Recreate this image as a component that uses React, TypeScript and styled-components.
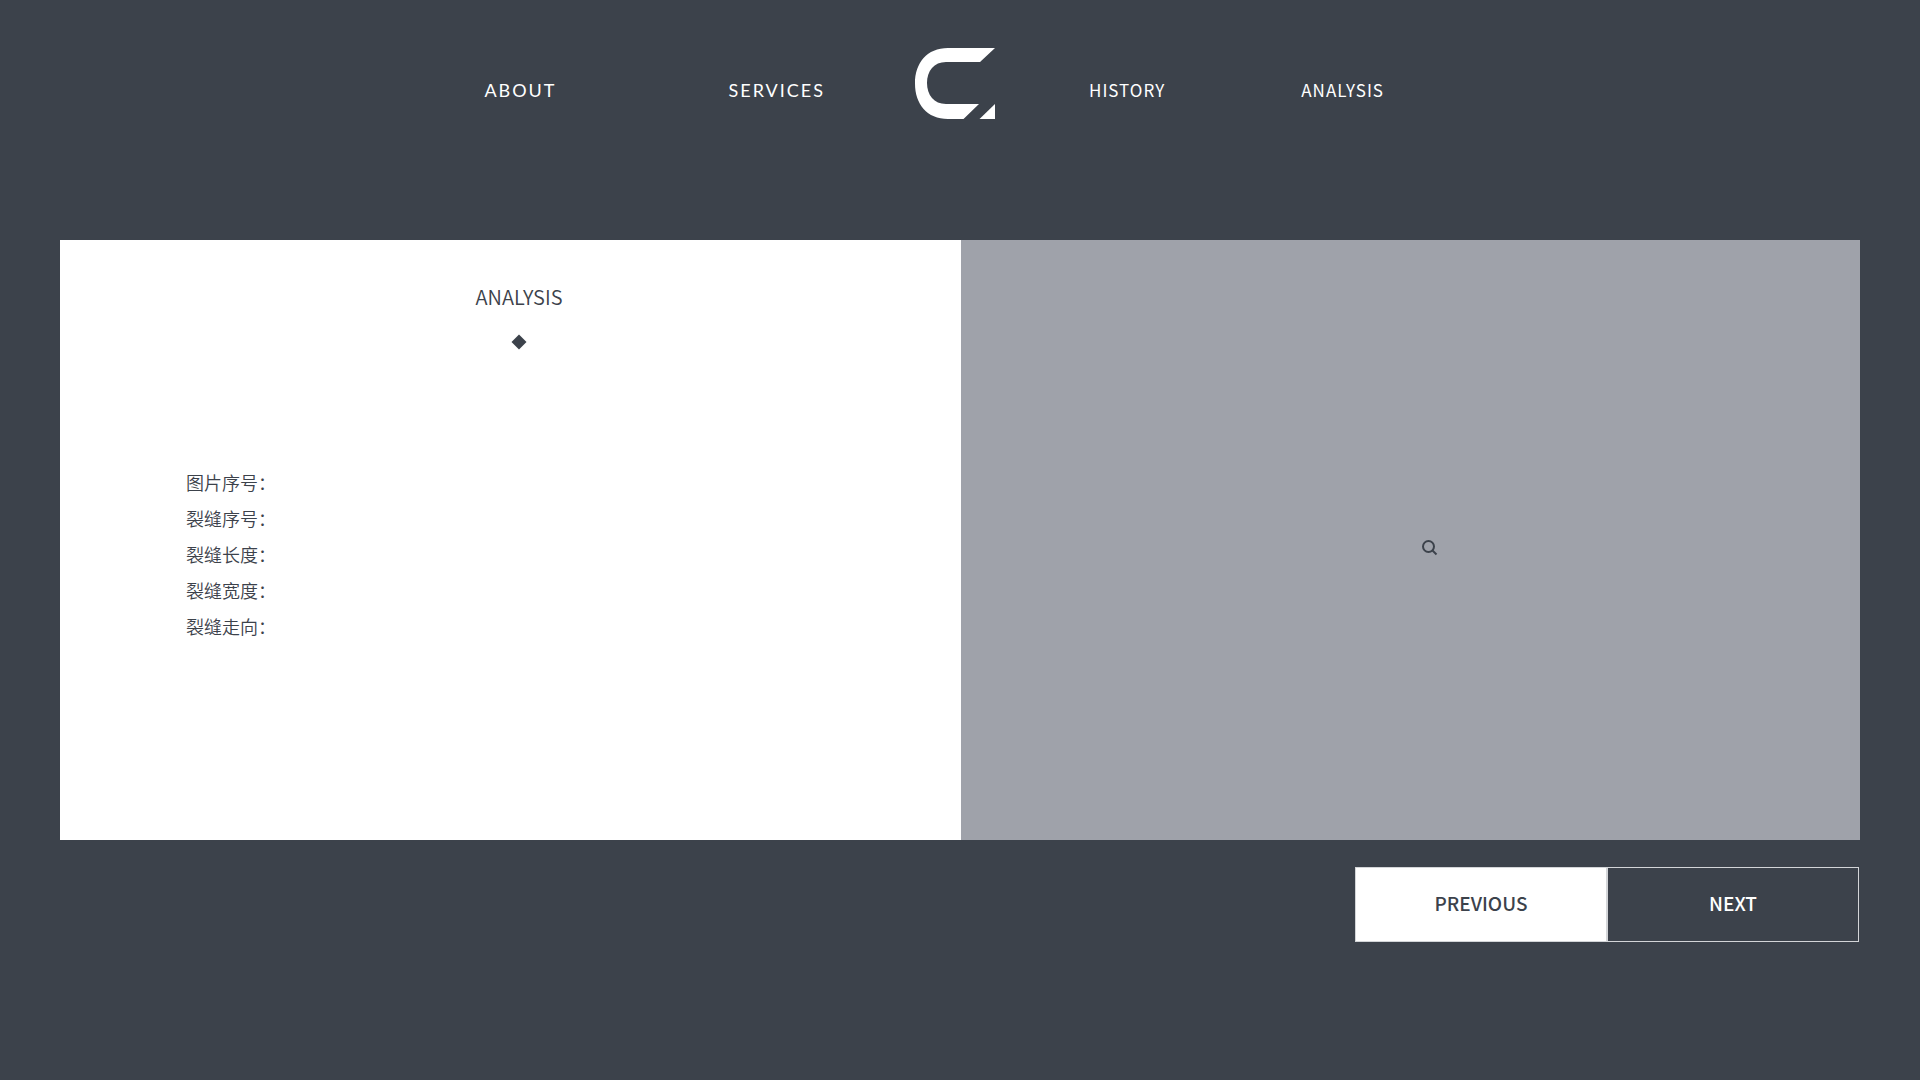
import React from "react";
import styled, { createGlobalStyle } from "styled-components";

const ink = "#3c424b";
const sans = `"Noto Sans CJK SC", "Noto Sans", sans-serif`;

const GlobalStyle = createGlobalStyle`
  *, *::before, *::after { box-sizing: border-box; }
  body {
    margin: 0;
    min-height: 100vh;
    background: ${ink};
    color: ${ink};
    font-family: ${sans};
  }
`;

const Page = styled.div`
  padding: 48px 60px;
`;

const Header = styled.header`
  display: grid;
  grid-template-columns: 1fr auto 1fr;
  align-items: center;
  padding-right: 10px;
`;

const NavGroup = styled.nav<{ $side: "left" | "right" }>`
  display: flex;
  justify-content: ${(p) => (p.$side === "left" ? "flex-end" : "flex-start")};
  gap: ${(p) => (p.$side === "left" ? 172 : 136)}px;
  padding: ${(p) => (p.$side === "left" ? "12px 90px 0" : "12px 94px 0")};
  font-family: ${(p) => (p.$side === "left" ? "Lato, sans-serif" : sans)};
  font-size: ${(p) => (p.$side === "left" ? 18 : 17)}px;
  letter-spacing: ${(p) => (p.$side === "left" ? 2 : 1)}px;
`;

const NavLink = styled.a`
  color: #fff;
  line-height: 24px;
  text-decoration: none;
`;

const HomeLink = styled.a`
  display: block;
  color: #fff;
`;

const LogoMark = styled.svg`
  display: block;
  width: 80px;
  height: 71px;
`;

const Panels = styled.main`
  display: grid;
  grid-template-columns: 901fr 899fr;
  min-height: 600px;
  margin-top: 121px;
`;

const Details = styled.section`
  padding: 42px 0 0 17px;
  background: #fff;
`;

const Title = styled.h1`
  margin: 0;
  font-size: 20px;
  font-weight: 350;
  line-height: 30px;
  text-align: center;
`;

const Diamond = styled.svg`
  display: block;
  width: 16px;
  height: 16px;
  margin: 22px auto 0;
`;

const Fields = styled.dl`
  margin: 114px 0 0 109px;
`;

const Field = styled.div`
  display: flex;
  font-size: 18px;
  font-weight: 350;
  line-height: 36px;
`;

const Value = styled.dd`
  margin: 0;
`;

const Preview = styled.section`
  display: flex;
  align-items: center;
  justify-content: center;
  padding: 15px 0 0 38px;
  background: #9fa2aa;
`;

const ZoomButton = styled.button`
  display: block;
  padding: 0;
  border: 0;
  background: none;
  color: ${ink};
  cursor: pointer;
`;

const SearchIcon = styled.svg`
  display: block;
  width: 16px;
  height: 16px;
`;

const Pager = styled.footer`
  display: flex;
  justify-content: flex-end;
  margin-top: 27px;
  padding-right: 1px;
`;

const PagerButton = styled.button<{ $filled?: boolean }>`
  width: 252px;
  height: 75px;
  padding: 0 0 4px;
  border: 1px solid #d3d5d8;
  background: ${(p) => (p.$filled ? "#fff" : "transparent")};
  color: ${(p) => (p.$filled ? ink : "#fff")};
  font-family: ${sans};
  font-size: 19px;
  font-weight: 500;
  line-height: 24px;
  cursor: pointer;
`;

const fields = ["图片序号", "裂缝序号", "裂缝长度", "裂缝宽度", "裂缝走向"];

export default function App() {
  return (
    <>
      <GlobalStyle />
      <Page>
        <Header>
          <NavGroup $side="left" aria-label="Company">
            <NavLink href="#about">ABOUT</NavLink>
            <NavLink href="#services">SERVICES</NavLink>
          </NavGroup>
          <HomeLink href="#home" aria-label="Home">
            <LogoMark viewBox="0 0 80 71" fill="currentColor" aria-hidden="true">
              <path d="M80 0H33C12 0 0 15 0 35.500C0 56 12 71 33 71H48.500L64 56H31C19 56 12 47 12 35C12 23 19 14 31 14H65Z" />
              <path d="M80 56V71H64.500Z" />
            </LogoMark>
          </HomeLink>
          <NavGroup $side="right" aria-label="Records">
            <NavLink href="#history">HISTORY</NavLink>
            <NavLink href="#analysis">ANALYSIS</NavLink>
          </NavGroup>
        </Header>
        <Panels>
          <Details>
            <Title>ANALYSIS</Title>
            <Diamond viewBox="0 0 16 16" fill="currentColor" aria-hidden="true">
              <path d="M8 0.500L15.500 8L8 15.500L0.500 8Z" />
            </Diamond>
            <Fields>
              {fields.map((name) => (
                <Field key={name}>
                  <dt>{name}：</dt>
                  <Value />
                </Field>
              ))}
            </Fields>
          </Details>
          <Preview>
            <ZoomButton type="button" aria-label="Enlarge image">
              <SearchIcon
                viewBox="0 0 16 16"
                fill="none"
                stroke="currentColor"
                strokeWidth="2"
                aria-hidden="true"
              >
                <circle cx="6.500" cy="6.500" r="5.500" />
                <path d="M10.500 10.500L14.500 14.500" />
              </SearchIcon>
            </ZoomButton>
          </Preview>
        </Panels>
        <Pager>
          <PagerButton type="button" $filled>
            PREVIOUS
          </PagerButton>
          <PagerButton type="button">NEXT</PagerButton>
        </Pager>
      </Page>
    </>
  );
}
